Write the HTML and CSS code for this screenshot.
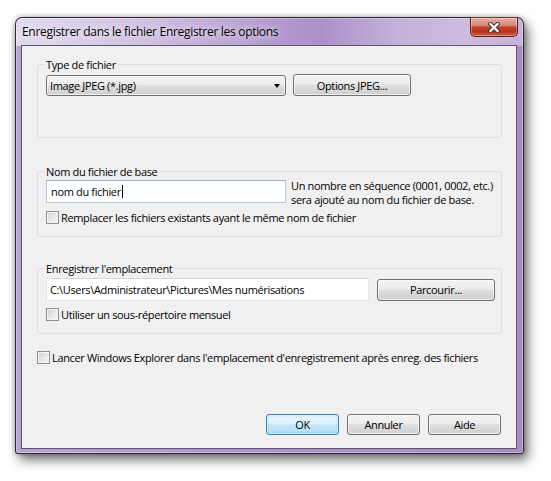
FILE: index.html
```html
<!DOCTYPE html>
<html lang="fr">
<head>
<meta charset="utf-8">
<title>Enregistrer dans le fichier Enregistrer les options</title>
<link rel="stylesheet" href="styles.css">
</head>
<body>
<div class="window">
  <div class="titlebar">
    <span class="title">Enregistrer dans le fichier Enregistrer les options</span>
    <button class="close" aria-label="Fermer">
      <svg width="12" height="11" viewBox="0 0 12 11">
        <path d="M2.5 2 L9.5 9 M9.5 2 L2.5 9" stroke="#3b3b3b" stroke-width="4.2" stroke-linecap="square" fill="none"/>
        <path d="M2.5 2 L9.5 9 M9.5 2 L2.5 9" stroke="#ffffff" stroke-width="2.2" stroke-linecap="square" fill="none"/>
      </svg>
    </button>
  </div>
  <div class="client">
    <fieldset class="group g1">
      <legend>Type de fichier</legend>
      <div class="row">
        <div class="combo"><span>Image JPEG (*.jpg)</span><span class="arrow"></span></div>
        <button class="btn wide">Options JPEG...</button>
      </div>
    </fieldset>

    <fieldset class="group g2">
      <legend>Nom du fichier de base</legend>
      <div class="row top">
        <div class="input focused">nom du fichier<span class="caret"></span></div>
        <p class="desc">Un nombre en séquence (0001, 0002, etc.)<br>sera ajouté au nom du fichier de base.</p>
      </div>
      <label class="check"><span class="box"></span>Remplacer les fichiers existants ayant le même nom de fichier</label>
    </fieldset>

    <fieldset class="group g3">
      <legend>Enregistrer l'emplacement</legend>
      <div class="row">
        <div class="input path">C:\Users\Administrateur\Pictures\Mes numérisations</div>
        <button class="btn wide">Parcourir...</button>
      </div>
      <label class="check"><span class="box"></span>Utiliser un sous-répertoire mensuel</label>
    </fieldset>

    <label class="check outside"><span class="box"></span>Lancer Windows Explorer dans l'emplacement d'enregistrement après enreg. des fichiers</label>

    <div class="actions">
      <button class="btn action default">OK</button>
      <button class="btn action">Annuler</button>
      <button class="btn action">Aide</button>
    </div>
  </div>
</div>
</body>
</html>
```

FILE: styles.css
```css
html {
  overflow: hidden;
}

body {
  box-sizing: border-box;
  margin: 0;
  padding: 17px 0 0 15px;
  min-height: 100vh;
  background: #ffffff;
  font-family: "Open Sans", "Noto Sans", sans-serif;
  font-size: 11px;
  letter-spacing: -0.35px;
  color: #000;
}

.window {
  box-sizing: border-box;
  width: 509px;
  height: 437px;
  padding: 0 6px 4px 5px;
  border: 1px solid rgba(35, 28, 45, 0.9);
  border-radius: 7px 7px 3px 3px;
  display: flex;
  flex-direction: column;
  background:
    linear-gradient(to right,
      rgba(255,255,255,0.6) 0%,
      rgba(255,255,255,0.42) 22%,
      rgba(255,255,255,0.05) 52%,
      rgba(255,255,255,0.0) 60%,
      rgba(255,255,255,0.3) 75%,
      rgba(255,255,255,0.42) 88%,
      rgba(255,255,255,0.35) 100%) top / 100% 28px no-repeat,
    linear-gradient(to right, #b9a2d4 0%, #ac90c9 60%, #a98ac7 100%);
  box-shadow:
    inset 0 0 0 1px rgba(255,255,255,0.35),
    4px 6px 12px rgba(0,0,0,0.55),
    0 0 5px rgba(0,0,0,0.3);
}

.titlebar {
  height: 27px;
  display: flex;
  justify-content: space-between;
  align-items: flex-start;
}

.title {
  padding: 6px 0 0 1px;
  font-size: 12px;
  letter-spacing: -0.3px;
  line-height: 16px;
  text-shadow: 0 0 6px rgba(255,255,255,0.8), 0 0 10px rgba(255,255,255,0.6);
}

.close {
  box-sizing: border-box;
  width: 48px;
  height: 20px;
  margin: -1px -1px 0 0;
  padding: 0;
  border: 1px solid #5a2620;
  border-top-color: #6b3a34;
  border-radius: 0 0 5px 5px;
  background: linear-gradient(#e9b0a4 0%, #d88a7c 40%, #c4402c 52%, #b8321f 75%, #d2603f 100%);
  box-shadow: inset 0 0 0 1px rgba(255,255,255,0.3);
  display: flex;
  align-items: center;
  justify-content: center;
}

.close svg { display: block; }

.client {
  box-sizing: border-box;
  height: 404px;
  border: 1px solid #5d5668;
  background: #f0f0f0;
  display: flex;
  flex-direction: column;
}

.group {
  margin: 0 14px 0 15px;
  padding: 0 8px;
  border: 1px solid #d5dfe5;
  border-radius: 3px;
  min-width: 0;
}

.group legend {
  padding: 0 2px;
  margin-left: -2px;
  line-height: 15px;
}

.g1 { margin-top: 11px; padding-top: 2px; padding-bottom: 41px; }
.g2 { margin-top: 26px; padding-top: 1px; padding-bottom: 11px; }
.g3 { margin-top: 24px; padding-top: 2px; padding-bottom: 11px; }

.row {
  display: flex;
  align-items: center;
}

.row > * { flex: none; }

.g1 .row { align-items: flex-start; gap: 7px; }
.g2 .row { align-items: flex-start; gap: 5px; }
.g3 .row { gap: 8px; }

.combo {
  box-sizing: border-box;
  width: 240px;
  height: 21px;
  margin-top: 1px;
  padding: 0 5px 0 3px;
  border: 1px solid #707070;
  border-radius: 3px;
  background: linear-gradient(#f3f3f3 0%, #ececec 45%, #dedede 52%, #d0d0d0 100%);
  box-shadow: inset 0 0 0 1px rgba(255,255,255,0.65);
  display: flex;
  align-items: center;
  justify-content: space-between;
  line-height: 15px;
}

.arrow {
  width: 0;
  height: 0;
  border-left: 3.5px solid transparent;
  border-right: 3.5px solid transparent;
  border-top: 4px solid #000;
  margin-top: 1px;
}

.btn {
  box-sizing: border-box;
  height: 22px;
  padding: 0;
  border: 1px solid #707070;
  border-radius: 3px;
  background: linear-gradient(#f3f3f3 0%, #ececec 45%, #dedede 52%, #d0d0d0 100%);
  box-shadow: inset 0 0 0 1px rgba(255,255,255,0.65);
  font: inherit;
  letter-spacing: inherit;
  color: #000;
  line-height: 15px;
}

.btn.wide { width: 118px; }

.input {
  box-sizing: border-box;
  height: 23px;
  padding: 0 4px;
  background: #fff;
  display: flex;
  align-items: center;
  line-height: 15px;
  white-space: nowrap;
}

.input.focused {
  width: 240px;
  border: 1px solid #b5c7da;
  border-top-color: #98aec6;
}

.input.path {
  width: 323px;
  border: 1px solid #e2e6eb;
  border-top-color: #d3d8de;
  padding-left: 3px;
}

.caret {
  display: inline-block;
  width: 1px;
  height: 13px;
  margin-left: 1px;
  background: #000;
}

.desc {
  margin: -1px 0 0 0;
  line-height: 14px;
  white-space: nowrap;
}

.check {
  display: flex;
  align-items: center;
  gap: 2px;
  line-height: 15px;
  white-space: nowrap;
}

.g2 .check { margin-top: 3px; }
.g3 .check { margin-top: 6px; }

.box {
  box-sizing: border-box;
  width: 13px;
  height: 13px;
  border: 1px solid #8e8f8f;
  background: linear-gradient(135deg, #cfd0d2 0%, #e6e6e6 50%, #f8f8f8 100%);
  box-shadow: inset 0 0 0 1px #f4f4f4;
  flex: none;
}

.check.outside { margin: 16px 0 0 15px; }

.actions {
  display: flex;
  justify-content: flex-end;
  gap: 8px;
  margin: 49px 15px 0 0;
}

.btn.action { width: 73px; height: 21px; }

.btn.default {
  border-color: #3c7fb1;
  background: linear-gradient(#ecf7fd 0%, #dcf1fc 45%, #c5e7fa 52%, #b2def6 100%);
  box-shadow: inset 0 0 0 1px rgba(255,255,255,0.55), inset 0 0 2px 1px rgba(72,180,230,0.45);
}
```
